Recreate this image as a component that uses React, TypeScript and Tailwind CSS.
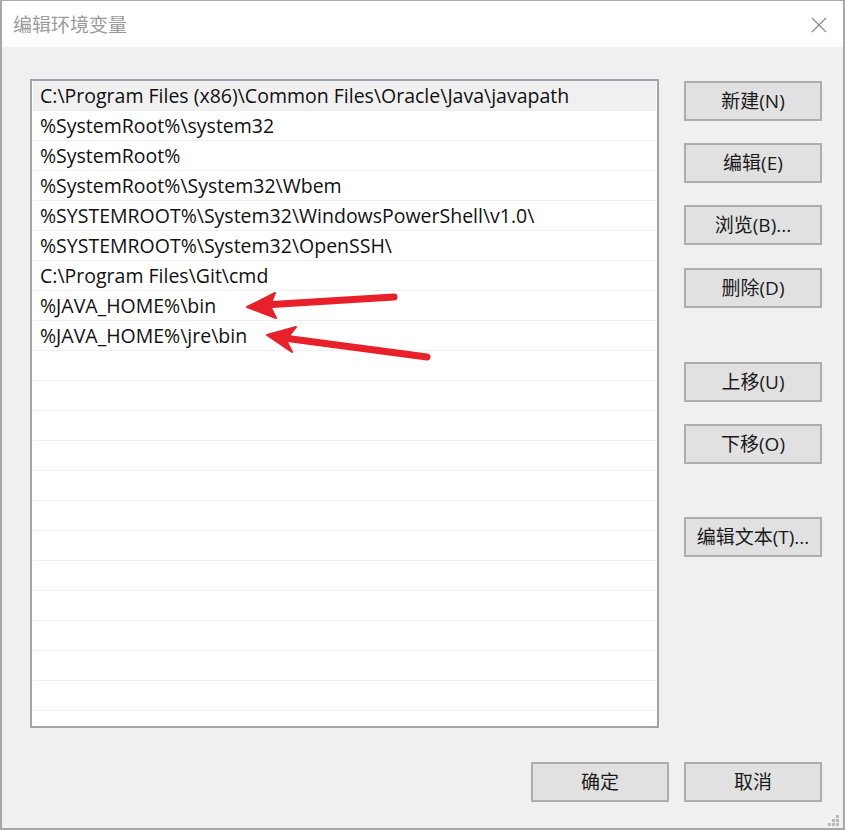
import React from "react";

const rows = [
  "C:\\Program Files (x86)\\Common Files\\Oracle\\Java\\javapath",
  "%SystemRoot%\\system32",
  "%SystemRoot%",
  "%SystemRoot%\\System32\\Wbem",
  "%SYSTEMROOT%\\System32\\WindowsPowerShell\\v1.0\\",
  "%SYSTEMROOT%\\System32\\OpenSSH\\",
  "C:\\Program Files\\Git\\cmd",
  "%JAVA_HOME%\\bin",
  "%JAVA_HOME%\\jre\\bin",
];

const font = { fontFamily: '"Open Sans", "Noto Sans CJK SC", sans-serif' };

function Btn({ label, className = "" }: { label: string; className?: string }) {
  return (
    <div
      className={
        "flex h-[40px] w-[138px] items-center justify-center border-2 border-[#adadad] bg-[#e1e1e1] text-[19px] text-[#1a1a1a] " +
        className
      }
    >
      {label}
    </div>
  );
}

export default function App() {
  const all = [...rows, ...Array(13).fill("")];
  return (
    <div
      className="relative h-[830px] w-[845px] overflow-hidden border-l-2 border-r-2 border-t border-b-2 border-[#a8a8a8] bg-[#f0f0f0]"
      style={font}
    >
      <div className="flex h-[46px] items-center justify-between bg-white pl-[11px] pr-[16px]">
        <span className="text-[19px] text-[#9b9b9b]" style={{ fontFamily: '"Noto Sans CJK SC", sans-serif' }}>
          编辑环境变量
        </span>
        <svg width="16" height="16" viewBox="0 0 16 16" className="mt-[1px]">
          <path d="M1 1 L15 15 M15 1 L1 15" stroke="#8c8c8c" strokeWidth="1.3" fill="none" />
        </svg>
      </div>
      <div className="flex pl-[28px] pt-[32px]">
        <div className="h-[649px] w-[629px] overflow-hidden border-2 border-[#a0a3aa] bg-white px-[1px]">
          {all.map((r, i) => (
            <div
              key={i}
              className={
                "flex h-[30px] items-center whitespace-nowrap border-b border-[#efefef] pl-[7px] text-[19.5px] leading-none text-[#111] " +
                (i === 0 ? "bg-[#f0f0f0]" : "")
              }
            >
              {r}
            </div>
          ))}
        </div>
        <div className="ml-[25px] flex flex-col pt-[2px]">
          <Btn label="新建(N)" />
          <Btn label="编辑(E)" className="mt-[22px]" />
          <Btn label="浏览(B)..." className="mt-[22px]" />
          <Btn label="删除(D)" className="mt-[23px]" />
          <Btn label="上移(U)" className="mt-[54px]" />
          <Btn label="下移(O)" className="mt-[22px]" />
          <Btn label="编辑文本(T)..." className="mt-[53px]" />
        </div>
      </div>
      <div className="flex justify-end gap-[15px] pr-[21px] pt-[34px]">
        <Btn label="确定" />
        <Btn label="取消" />
      </div>
      <svg className="absolute bottom-[1px] right-[3px]" width="14" height="14" viewBox="0 0 14 14">
        {[
          [10, 2],
          [6, 6],
          [10, 6],
          [2, 10],
          [6, 10],
          [10, 10],
        ].map(([x, y], i) => (
          <rect key={i} x={x} y={y} width="3" height="3" fill="#b8b8b8" />
        ))}
      </svg>
      <svg className="pointer-events-none absolute left-0 top-0" width="845" height="830">
        <g fill="#e8202a" stroke="#e8202a" strokeLinecap="round" strokeLinejoin="round">
          <line x1="392" y1="296" x2="262" y2="304" strokeWidth="7" />
          <polygon points="245,306 273,292 268,305 274,317" strokeWidth="2" />
          <line x1="425" y1="356" x2="282" y2="337" strokeWidth="7" />
          <polygon points="265,334 294,326 284,339 290,351" strokeWidth="2" />
        </g>
      </svg>
    </div>
  );
}
